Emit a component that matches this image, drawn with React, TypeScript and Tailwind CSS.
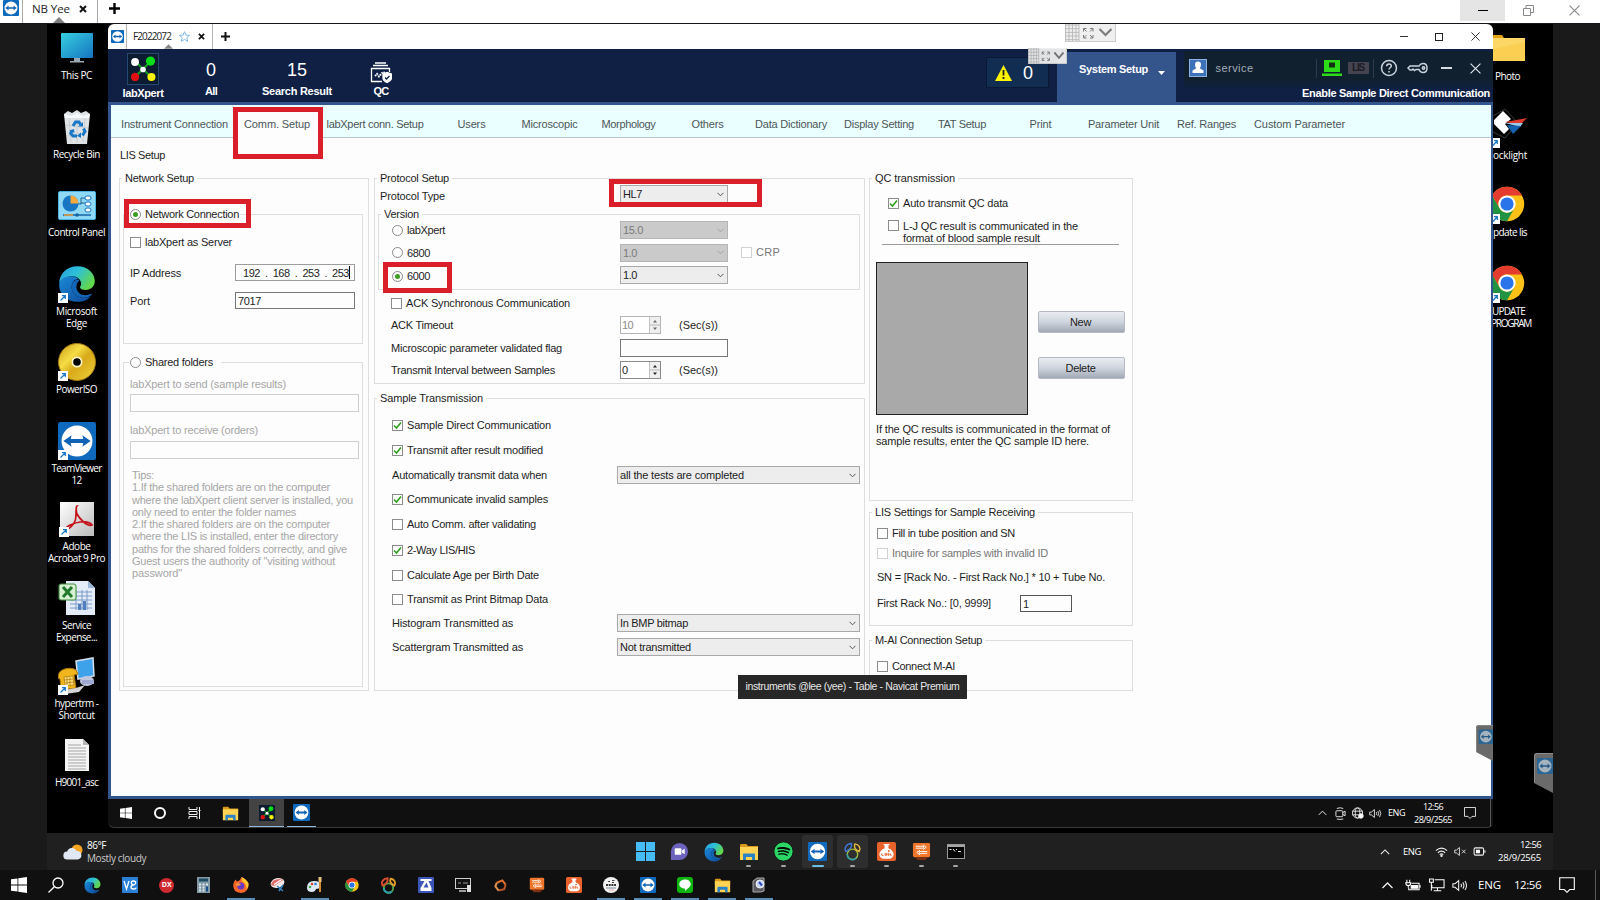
import { useLayoutEffect, useRef, useState, type ReactNode } from "react";
import clsx from "clsx";
import { FaSpotify } from "react-icons/fa6";

/* Single line of text, tracked so that it spans the given width. */
function Fit({ w, children, className }: { w: number; children: string; className?: string }) {
  const ref = useRef<HTMLSpanElement>(null);
  const [tracking, setTracking] = useState(0);
  useLayoutEffect(() => {
    if (ref.current) {
      const natural = ref.current.getBoundingClientRect().width;
      setTracking((w - natural) / children.length);
    }
  }, []);
  return (
    <span ref={ref} className={clsx("inline-block whitespace-pre", className)} style={{ letterSpacing: tracking }}>
      {children}
    </span>
  );
}

/* ---------- icons ---------- */

function TeamViewer({ className }: { className?: string }) {
  return (
    <svg viewBox="0 0 32 32" className={clsx("shrink-0", className)}>
      <rect width="32" height="32" rx="2" fill="#0f69bd" />
      <circle cx="16" cy="16" r="13" fill="#fff" />
      <path d="M4.500 16l7-4.800-.8 3.100h10.600l-.8-3.100 7 4.800-7 4.800.8-3.100H10.700l.8 3.100z" fill="#0f62b4" />
    </svg>
  );
}

function Edge({ className }: { className?: string }) {
  return (
    <svg viewBox="0 0 32 32" className={className}>
      <defs>
        <linearGradient id="edgeTop" x1="0" y1="0" x2="1" y2="0.5">
          <stop offset="0" stopColor="#2a9be0" />
          <stop offset="0.5" stopColor="#2cc0d8" />
          <stop offset="1" stopColor="#62d74e" />
        </linearGradient>
        <linearGradient id="edgeLow" x1="0" y1="0" x2="1" y2="1">
          <stop offset="0" stopColor="#1b8ad8" />
          <stop offset="1" stopColor="#0c4a9a" />
        </linearGradient>
      </defs>
      <path d="M1 16C1 7 7.500 1 16.500 1 25.500 1 31 7.500 31 13.500c0 4.500-3.500 7.500-7.500 7.500-3 0-5-.9-5-2.200 0-.8 1-1.200 1-3C19.500 12.500 16.500 9.500 12 9.500 6 9.500 1.500 13 1 16z" fill="url(#edgeTop)" />
      <path d="M1 16c.5-4 5-6.500 10-6.500 3 0 5 1 6.500 2.500-3.500-.5-6 2.500-6 6.500 0 5.500 5 9 10 9 2.500 0 4.500-.8 6-1.500C25 29.500 21 31 16.500 31 7.500 31 .5 24.500 1 16z" fill="url(#edgeLow)" />
      <path d="M11.500 18.500c0 5.500 5 9 10 9 2.700 0 5-.9 6.700-2.200.5-.5.2-1.100-.5-.8-6.200 2.600-12.200-.5-12.200-6 0-2.500 1.200-4.500 2.800-5.800-3.800-1.200-6.800 1.800-6.800 5.800z" fill="#1266b8" />
    </svg>
  );
}

function Chrome({ className }: { className?: string }) {
  return (
    <svg viewBox="0 0 48 48" className={className}>
      <circle cx="24" cy="24" r="23" fill="#fbc116" />
      <path d="M4.080 12.500A23 23 0 0 1 43.900 12.500H24a11.500 11.500 0 0 0-10 17.200z" fill="#e33b2e" />
      <path d="M4.080 12.500A23 23 0 0 0 24 47l10-17.250A11.500 11.500 0 0 1 14.040 29.750z" fill="#229342" />
      <circle cx="24" cy="24" r="11.500" fill="#fff" />
      <circle cx="24" cy="24" r="8.800" fill="#2a74ea" />
    </svg>
  );
}

function Folder({ className }: { className?: string }) {
  return (
    <svg viewBox="0 0 20 20" className={className}>
      <path d="M1 3.500C1 2.700 1.500 2 2.300 2h5l1.700 2H19v5H1z" fill="#d99a1c" />
      <path d="M1 5h18v12.500a.5.500 0 0 1-.5.500h-17a.5.500 0 0 1-.5-.5z" fill="#ffd353" />
      <path d="M4 18v-5.500c0-.6.500-1 1-1h10c.6 0 1 .5 1 1V18h-3v-3H7v3z" fill="#2b83c6" />
    </svg>
  );
}

function LabX({ className }: { className?: string }) {
  return (
    <svg viewBox="0 0 32 32" className={className}>
      <rect width="32" height="32" fill="#0b1b30" />
      <path d="M8 8L24 24M24 8L8 24" stroke="#159a25" strokeWidth="2.200" />
      <circle cx="7.500" cy="8.500" r="4.200" fill="#fff" />
      <circle cx="24" cy="7.500" r="4.900" fill="#06dd17" />
      <circle cx="7.500" cy="24.500" r="4.400" fill="#e01010" />
      <circle cx="25" cy="24.500" r="4.300" fill="#fdf403" />
      <circle cx="16" cy="16.500" r="3" fill="#fff" />
    </svg>
  );
}

function WinLogo({ className }: { className?: string }) {
  return (
    <svg viewBox="0 0 16 16" className={className} fill="#fff">
      <path d="M0 2.300L6.500 1.400v6.200H0zM7.300 1.300L16 0v7.600H7.300zM0 8.400h6.500v6.200L0 13.700zM7.300 8.400H16V16l-8.700-1.300z" />
    </svg>
  );
}

function Cross({ className }: { className?: string }) {
  return (
    <svg viewBox="0 0 10 10" className={className} stroke="currentColor" fill="none">
      <path d="M.5.500l9 9M9.500.500l-9 9" />
    </svg>
  );
}

function ChevUp({ className }: { className?: string }) {
  return (
    <svg viewBox="0 0 12 7" className={className} stroke="#eee" strokeWidth="1.300" fill="none">
      <path d="M1 6l5-5 5 5" />
    </svg>
  );
}

function Speaker({ className, muted }: { className?: string; muted?: boolean }) {
  return (
    <svg viewBox="0 0 18 14" className={className} stroke="#eee" strokeWidth="1.200" fill="none">
      <path d="M1 5h2.500L7.500 1.500v11L3.500 9H1z" />
      {muted ? <path d="M11 4.500l5 5M16 4.500l-5 5" /> : <path d="M10 5q1.300 2 0 4M12.200 3.500q2.400 3.500 0 7M14.600 2q3.400 5 0 10" />}
    </svg>
  );
}

function Notice({ className }: { className?: string }) {
  return (
    <svg viewBox="0 0 16 16" className={className} stroke="#fff" strokeWidth="1.100" fill="none">
      <path d="M.7.700h14.600v11.800h-4.600L8 15.300l-2.700-2.800H.7z" />
    </svg>
  );
}

function Jar({ className }: { className?: string }) {
  return (
    <svg viewBox="0 0 20 20" className={className}>
      <rect width="20" height="20" rx="2" fill="#e8622c" />
      <path d="M7 2h6v1.500h-1v3c3 1.200 5.500 3.500 5.500 6.500 0 2.500-1.500 4-3.500 4.700H6C4 17 2.500 15.500 2.500 13c0-3 2.500-5.300 5.500-6.500v-3H7z" fill="#fff" />
      <path d="M5 12v2h2M8.500 12h1.500v2H8.500zM11.500 12h1v2h-1zM14 12v2h1.500" stroke="#e8622c" fill="none" />
      <circle cx="12.500" cy="9.500" r="1" fill="#e8622c" />
    </svg>
  );
}

function Board({ className }: { className?: string }) {
  return (
    <svg viewBox="0 0 20 20" className={className}>
      <rect x="1" y="1" width="18" height="15" rx="1.500" fill="#f0762b" />
      <path d="M3 16h14l-3 3H6z" fill="#7d2f12" />
      <path d="M4 4.500h8v2H4M11.500 3l3.500 2.500L11.500 8M16 10H8v2h8M8.500 8.500L5 11l3.500 2.500" stroke="#fff" strokeWidth="1" fill="none" />
    </svg>
  );
}

function Navicat({ className, warm }: { className?: string; warm?: boolean }) {
  return (
    <svg viewBox="0 0 20 20" className={className} fill="none" strokeWidth={warm ? 2.200 : 1.500}>
      <circle cx="10" cy="13" r="5.500" stroke={warm ? "#58a94a" : "#9dbb3e"} />
      <path d="M4.500 13a5.500 5.500 0 0 0 9.500 3.800" stroke="#2c9fb0" />
      <path d="M3 10C.8 6 4 1.500 9 1.500 9.500 5 7.500 8 3 10z" stroke={warm ? "#d94c32" : "#3f77d8"} />
      <path d="M17 10c2.200-4-.5-7.500-4.500-8-1.500 3.500.5 6.500 4.500 8z" stroke={warm ? "#e39b2d" : "#e6bc3a"} />
    </svg>
  );
}

function GripBar({ large }: { large?: boolean }) {
  return (
    <svg viewBox="0 0 51 18" preserveAspectRatio="none" className={large ? "h-[18px] w-[51px]" : "h-4 w-[39px]"}>
      <rect width="51" height="18" fill="#efefef" />
      <path d="M.5 0v18M4 0v18M7.500 0v18M11 0v18M14 0v18M0 1h14M0 4.700h14M0 8.400h14M0 12h14M0 15.700h14" stroke="#b9b9b9" strokeWidth="1" />
      <path d="M18.500 7.500v-3h3M25 4.500h3v3M28 11v3h-3M21.500 14h-3v-3M18.500 4.500l3 3M28 4.500l-3 3M28 14l-3-3M18.500 14l3-3" stroke="#777" fill="none" />
      <path d="M34.500 5l6 6 6-6" stroke="#777" strokeWidth="2.200" fill="none" />
      <path d="M0 17.500h51M50.500 0v18" stroke="#c9c9c9" />
    </svg>
  );
}

/* ---------- form parts ---------- */

function Check({ on, dim }: { on?: boolean; dim?: boolean }) {
  return (
    <span className={clsx("flex size-[11px] shrink-0 items-center justify-center border bg-white", dim ? "border-[#d2d2d2]" : "border-[#8c8c8c]")}>
      {on && (
        <svg viewBox="0 0 9 9" className="size-[9px]" fill="none" stroke="#2f9e1c" strokeWidth="1.600">
          <path d="M1 4.500L3.500 7 8 1.500" />
        </svg>
      )}
    </span>
  );
}

function Radio({ on }: { on?: boolean }) {
  return (
    <span className="flex size-[11px] shrink-0 items-center justify-center rounded-full border border-[#8a8a8a] bg-white">
      {on && <span className="size-[5px] rounded-full bg-[#3c9f22]" />}
    </span>
  );
}

function Select({ text, w, dim, className }: { text: string; w: number; dim?: boolean; className?: string }) {
  return (
    <div className={clsx("flex h-[18px] items-center justify-between border pl-[2px] pr-[3px]", dim ? "border-[#b5b5b5] bg-[#cacaca] text-[#7a7a7a]" : "border-[#a9a9a9] bg-[#ededed]", className)}>
      <Fit w={w}>{text}</Fit>
      <svg viewBox="0 0 7 5" className="h-[5px] w-[7px]" fill="none" stroke={dim ? "#a2a2a2" : "#555"}>
        <path d="M.5.800l3 3 3-3" />
      </svg>
    </div>
  );
}

function Spinner({ text, w, dim }: { text: string; w: number; dim?: boolean }) {
  return (
    <div className={clsx("flex h-[18px] w-[41px] items-stretch border bg-white", dim ? "border-[#b5b5b5] text-[#8a8a8a]" : "border-[#8a8a8a]")}>
      <span className="flex flex-1 items-center pl-px">
        <Fit w={w}>{text}</Fit>
      </span>
      <span className="flex w-[11px] flex-col border-l border-[#c4c4c4] bg-[#efefef]">
        <svg viewBox="0 0 10 16" className="h-4 w-[10px]">
          <path d="M3 5.500L5 3l2 2.500zM3 10.500L5 13l2-2.500z" fill={dim ? "#666" : "#222"} />
          <path d="M0 8h10" stroke="#b5b5b5" />
        </svg>
      </span>
    </div>
  );
}

function Group({ title, w, className, children }: { title: string; w: number; className: string; children: ReactNode }) {
  return (
    <fieldset className={clsx("border border-[#dedede]", className)}>
      <legend className="ml-[2px] h-[14px] px-[3px] leading-[14px]">
        <Fit w={w}>{title}</Fit>
      </legend>
      {children}
    </fieldset>
  );
}

function Marker({ className }: { className: string }) {
  return <div className={clsx("pointer-events-none absolute border-[5px] border-[#da1f2b]", className)} />;
}

function CheckRow({ text, w, on, dim, className }: { text: string; w: number; on?: boolean; dim?: boolean; className: string }) {
  return (
    <label className={clsx("flex items-center gap-[4px]", dim && "text-[#777]", className)}>
      <Check on={on} dim={dim} />
      <Fit w={w} className="pb-px">{text}</Fit>
    </label>
  );
}

/* ---------- desktop icons ---------- */

function Shortcut() {
  return (
    <svg viewBox="0 0 10 10" className="absolute bottom-0 left-0 size-[10px]">
      <rect width="10" height="10" fill="#fff" />
      <path d="M2.500 7.500L7 3M4 2.700h3.300V6" stroke="#1977c9" strokeWidth="1.200" fill="none" />
    </svg>
  );
}

const art: Record<string, ReactNode> = {
  pc: (
    <svg viewBox="0 0 34 32" className="h-8 w-[34px]">
      <defs>
        <linearGradient id="screen" x1="0" y1="0" x2="1" y2="1">
          <stop offset="0" stopColor="#36d0de" />
          <stop offset="1" stopColor="#1673c2" />
        </linearGradient>
      </defs>
      <rect x="1" y="1" width="32" height="25" rx="1" fill="url(#screen)" />
      <path d="M14 26h6v3h-6zM10 29h14v1.500H10z" fill="#9aa7b0" />
    </svg>
  ),
  bin: (
    <svg viewBox="0 0 28 34" className="h-[34px] w-7">
      <path d="M1 4l4-3 4 2 5-3 4 3 5-2 4 3-3 30H4z" fill="#dfe3e6" />
      <path d="M1 4l7 2 6-3 6 3 7-2-1 4H2z" fill="#f7f8f9" />
      <path d="M6 8l2 24M14 9v24M22 8l-2 24M3 15l22 3M4 26l20-4" stroke="#c2c8cd" strokeWidth=".8" />
      <path d="M10 16l2.500-4h3.500l1.500 2.500M20.500 18.500l1.500 3-2.500 4M14 26h-4l-2.300-2.700 1.300-2.500" stroke="#1878c8" strokeWidth="3" fill="none" />
      <path d="M15 16.500h5V12zM18 22.500V28l-4-2.200zM6 20.500l5-1.500.5 4z" fill="#1878c8" />
    </svg>
  ),
  panel: (
    <svg viewBox="0 0 38 29" className="h-[29px] w-[38px]">
      <rect x=".5" y=".5" width="37" height="28" rx="1.500" fill="#8fd8f6" stroke="#4ab3e0" />
      <circle cx="12.500" cy="12.500" r="8" fill="#1976c5" />
      <path d="M12.500 12.500V4.500a8 8 0 0 1 8 8z" fill="#f5a83c" />
      <path d="M20 13h3V7h4M23 13v-1h4" stroke="#23638f" fill="none" />
      <rect x="27" y="5" width="6" height="4" rx="2" fill="#fff" stroke="#1976c5" />
      <rect x="27" y="11" width="6" height="4" rx="2" fill="#fff" stroke="#1976c5" />
      <rect x="27" y="17" width="6" height="4" rx="2" fill="#fff" stroke="#1976c5" />
      <path d="M5 24h28" stroke="#1464a5" strokeWidth="1.500" />
      <path d="M6 24h9" stroke="#f0a13a" strokeWidth="1.500" />
      <circle cx="19" cy="24" r="1.800" fill="#1464a5" />
    </svg>
  ),
  edge: <Edge className="size-[38px]" />,
  iso: (
    <svg viewBox="0 0 38 38" className="size-[38px]">
      <defs>
        <linearGradient id="disc" x1="0" y1="0" x2="1" y2="1">
          <stop offset="0" stopColor="#c99b14" />
          <stop offset=".35" stopColor="#f6dd46" />
          <stop offset=".55" stopColor="#d8a91a" />
          <stop offset="1" stopColor="#efd23c" />
        </linearGradient>
      </defs>
      <circle cx="19" cy="19" r="18.500" fill="url(#disc)" stroke="#a37a15" />
      <circle cx="19" cy="19" r="5.500" fill="#fff6c8" />
      <circle cx="19" cy="19" r="3.800" fill="#000" />
    </svg>
  ),
  tv: <TeamViewer className="size-[38px]" />,
  pdf: (
    <svg viewBox="0 0 36 36" className="size-9">
      <defs>
        <linearGradient id="sheet" x1="0" y1="0" x2="1" y2="1">
          <stop offset="0" stopColor="#fff" />
          <stop offset="1" stopColor="#bcbcbc" />
        </linearGradient>
      </defs>
      <rect x="1" y="1" width="34" height="34" fill="url(#sheet)" />
      <path d="M18 5c-2 2 0 10-2 15S9 29 6 29c1-4 9-7 15-8s11 1 12 3c-5 2-13-7-15-11-1-3-1-8 0-8z" stroke="#c4151c" strokeWidth="1.700" fill="none" />
    </svg>
  ),
  xls: (
    <svg viewBox="0 0 38 36" className="h-9 w-[38px]">
      <path d="M8 1h22l7 7v27H8z" fill="#e3ecf7" />
      <path d="M30 1v7h7z" fill="#9db7d8" />
      <path d="M12 12h22M12 16h22M12 20h22M12 24h22M12 28h22M18 10v20M24 10v20M29 10v20" stroke="#7c9cc9" />
      <path d="M20 30v-6h3v6M25 30v-9h3v9" fill="#4f7fbf" />
      <rect x="1" y="4" width="17" height="16" rx="2" fill="#d7efd2" stroke="#3f8f3d" />
      <path d="M5 7l9 10M14 7L5 17" stroke="#217a2b" strokeWidth="3" />
    </svg>
  ),
  hyper: (
    <svg viewBox="0 0 38 38" className="size-[38px]">
      <path d="M18 4l17-3 1 18-16 3z" fill="#3da2ea" stroke="#d8dfe8" strokeWidth="1.500" />
      <ellipse cx="29" cy="24" rx="7" ry="5" fill="#bfc6e0" />
      <path d="M24 27h12v-4H24z" fill="#9fa9cf" />
      <path d="M1 16c3-5 13-6 17-3l2 4-4 1 2 13-15 2-1-11-2-1z" fill="#f0b51c" stroke="#a8740c" />
      <path d="M6 20l9-1 1 9-9 1z" fill="#ffe07a" stroke="#a8740c" strokeWidth=".7" />
      <path d="M9 20v8M12 20v8M6 23l9-1M7 26l9-1" stroke="#a8740c" strokeWidth=".7" />
      <path d="M6 33l12-2 9-3-6 7-14 2z" fill="#d5d5d8" />
    </svg>
  ),
  txt: (
    <svg viewBox="0 0 26 34" className="h-[34px] w-[26px]">
      <path d="M1 1h18l6 6v26H1z" fill="#f4f4f4" />
      <path d="M19 1v6h6z" fill="#b7b7b7" />
      <path d="M4 7h13M4 10h18M4 13h18M4 16h18M4 19h18M4 22h18M4 25h18M4 28h18M4 31h18" stroke="#a5a5a5" />
    </svg>
  ),
};

const leftIcons: { art: string; link?: boolean; lines: [string, number][] }[] = [
  { art: "pc", lines: [["This PC", 31]] },
  { art: "bin", lines: [["Recycle Bin", 47]] },
  { art: "panel", lines: [["Control Panel", 57]] },
  { art: "edge", link: true, lines: [["Microsoft", 41], ["Edge", 21]] },
  { art: "iso", link: true, lines: [["PowerISO", 41]] },
  { art: "tv", link: true, lines: [["TeamViewer", 50], ["12", 10]] },
  { art: "pdf", link: true, lines: [["Adobe", 28], ["Acrobat 9 Pro", 57]] },
  { art: "xls", lines: [["Service", 29], ["Expense...", 41]] },
  { art: "hyper", link: true, lines: [["hypertrm -", 44], ["Shortcut", 36]] },
  { art: "txt", lines: [["H9001_asc", 43]] },
];

function DesktopLeft() {
  return (
    <div className="flex w-[61px] shrink-0 flex-col pr-[2px] pt-[3px] font-['Open_Sans',sans-serif] text-[10px] text-white">
      {leftIcons.map((i) => (
        <div key={i.lines[0][0]} className="flex h-[78.500px] flex-col items-center">
          <div className="flex h-[42px] items-center">
            <div className="relative">
              {art[i.art]}
              {i.link && <Shortcut />}
            </div>
          </div>
          {i.lines.map(([t, w]) => (
            <Fit key={t} w={w} className="h-[12px] leading-[12px]">
              {t}
            </Fit>
          ))}
        </div>
      ))}
    </div>
  );
}

function DesktopRight() {
  const link = (
    <svg viewBox="0 0 7 10" className="absolute bottom-0 left-0 h-[10px] w-[7px]">
      <rect width="7" height="10" fill="#fff" />
      <path d="M0 7.500L4 3M1 2.700h3.300V6" stroke="#1977c9" strokeWidth="1.200" fill="none" />
    </svg>
  );
  return (
    <div className="flex w-[60px] shrink-0 flex-col overflow-hidden pt-[3px] font-['Open_Sans',sans-serif] text-[10px] text-white">
      <div className="h-[78.500px]">
        <div className="flex h-[42px] items-center">
          <svg viewBox="0 0 32 28" className="h-7 w-8">
            <path d="M0 1h9l2 3H0z" fill="#e0a312" />
            <path d="M0 4h32v23H0z" fill="#fcd766" />
            <path d="M0 15L32 8v19H0z" fill="#fbcf52" />
          </svg>
        </div>
        <Fit w={25} className="ml-[2px] leading-[12px]">Photo</Fit>
      </div>
      <div className="h-[78.500px]">
        <div className="relative h-[42px]">
          <svg viewBox="0 0 34 40" className="h-10 w-[34px]">
            <path d="M0 10l12-7 13 14-13 15L0 26" fill="#000" stroke="#3a3a3a" />
            <path d="M1 14L10 5l8 8-6 5 4 5-5 5L1 18z" fill="#fff" />
            <path d="M12 16l22-4-7 7z" fill="#e03a2c" />
            <path d="M12 17l18 0-3 4z" fill="#9cc7e8" />
            <path d="M14 19l14 1-8 8z" fill="#1463b0" />
          </svg>
          {link}
        </div>
        <Fit w={34} className="leading-[12px]">ocklight</Fit>
      </div>
      <div className="h-[78.500px]">
        <div className="relative h-[40px] pt-[2px]">
          <Chrome className="-ml-1 size-9" />
          {link}
        </div>
        <Fit w={34} className="mt-[2px] leading-[12px]">pdate lis</Fit>
      </div>
      <div className="h-[78.500px]">
        <div className="relative h-[40px] pt-[2px]">
          <Chrome className="-ml-1 size-9" />
          {link}
        </div>
        <div className="-ml-px mt-[2px] flex flex-col items-start">
          <Fit w={33} className="h-[12px] leading-[12px]">UPDATE</Fit>
          <Fit w={40} className="-ml-px h-[12px] leading-[12px]">PROGRAM</Fit>
        </div>
      </div>
    </div>
  );
}

/* ---------- labXpert window ---------- */

const tabs: [string, number, string][] = [
  ["Instrument Connection", 107, "ml-[10px]"],
  ["Comm. Setup", 66, "ml-[16px]"],
  ["labXpert conn. Setup", 97, "ml-[16.500px]"],
  ["Users", 28, "ml-[34px]"],
  ["Microscopic", 56, "ml-[36px]"],
  ["Morphology", 54, "ml-[24px]"],
  ["Others", 32, "ml-[36px]"],
  ["Data Dictionary", 72, "ml-[31.500px]"],
  ["Display Setting", 70, "ml-[17px]"],
  ["TAT Setup", 48, "ml-[24px]"],
  ["Print", 22, "ml-[43.500px]"],
  ["Parameter Unit", 71, "ml-[36.500px]"],
  ["Ref. Ranges", 59, "ml-[18px]"],
  ["Custom Parameter", 91, "ml-[18px]"],
];

function WindowTitle() {
  return (
    <div className="flex h-[25px] items-center rounded-t-[6px] bg-white">
      <TeamViewer className="ml-[3px] size-[13px]" />
      <div className="relative ml-[2px] flex h-full w-[87px] items-center border-x border-[#b5b5b5] pl-[6px] font-['Open_Sans',sans-serif] text-[10px] text-[#222]">
        <Fit w={38} className="pb-px">F2022072</Fit>
        <svg viewBox="0 0 12 12" className="ml-2 size-[11px]" fill="none" stroke="#79b5e6">
          <path d="M6 .8l1.500 3.700 4 .3-3 2.600 1 3.900L6 9.200l-3.500 2.100 1-3.900-3-2.600 4-.3z" />
        </svg>
        <svg viewBox="0 0 8 8" className="ml-2 size-[7px]" stroke="#111" strokeWidth="2">
          <path d="M1 1l6 6M7 1L1 7" />
        </svg>
        <svg viewBox="0 0 10 5" className="absolute bottom-0 left-[37px] h-[5px] w-[9px]">
          <path d="M0 5l5-5 5 5z" fill="#888" />
        </svg>
      </div>
      <svg viewBox="0 0 9 9" className="ml-[8px] size-[9px]" stroke="#111" strokeWidth="2">
        <path d="M4.500 0v9M0 4.500h9" />
      </svg>
      <div className="ml-auto flex items-center pr-[13px] text-[#222]">
        <span className="h-px w-[8px] bg-[#333]" />
        <span className="ml-[27px] size-[8px] border border-[#222]" />
        <Cross className="ml-[28px] size-[9px]" />
      </div>
    </div>
  );
}

function Header() {
  return (
    <header className="flex h-[56px] border-b-[3px] border-[#34548c] bg-[#0f2044] text-[11px] font-bold text-white">
      <div className="ml-[14px] flex w-[42px] flex-col items-center pt-[4px]">
        <LabX className="size-8 border border-[#27496f]" />
        <Fit w={41} className="mt-px leading-[14px]">labXpert</Fit>
      </div>
      <div className="ml-[25px] flex w-[44px] flex-col items-center pt-[9px]">
        <span className="text-[18px] font-normal leading-[24px]">0</span>
        <Fit w={12} className="mt-[2px] leading-[14px]">All</Fit>
      </div>
      <div className="ml-[29px] flex w-[70px] flex-col items-center pt-[9px]">
        <Fit w={20} className="text-[18px] font-normal leading-[24px]">15</Fit>
        <Fit w={70} className="mt-[2px] leading-[14px]">Search Result</Fit>
      </div>
      <div className="ml-[34px] flex w-[30px] flex-col items-center pt-[13px]">
        <svg viewBox="0 0 22 21" className="h-[21px] w-[22px]" fill="none" stroke="#fff" strokeWidth="1.300">
          <path d="M5 1h11M3 3.500h15M12 19.500H1.500v-13h18V10" />
          <path d="M5 14l2-2 2 2.500L13 10l2 1" strokeDasharray="1.500 1" strokeWidth="2" />
          <path d="M13 12l4-1.500L21.500 12v4c0 2-2 3.500-4.500 4.500-2.500-1-4-2.500-4-4.500z" fill="#fff" />
          <path d="M15 15.500l1.500 1.500 3-3" stroke="#0f2044" />
        </svg>
        <Fit w={15} className="mt-[1px] leading-[14px]">QC</Fit>
      </div>
      <div className="ml-auto mt-[8px] flex h-[31px] w-[63px] items-center border border-[#0a1835] bg-[#122d52] pl-[8px]">
        <svg viewBox="0 0 17 16" className="h-4 w-[17px]">
          <path d="M8.500 0L17 16H0z" fill="#fbf400" />
          <path d="M8.500 5v5.500M8.500 12v2" stroke="#222" strokeWidth="1.800" />
        </svg>
        <span className="ml-[11px] text-[18px] font-normal">0</span>
      </div>
      <div className="ml-[8px] mt-[3px] flex w-[119px] items-start bg-[#34548c] pl-[22px] pt-[10px]">
        <Fit w={69} className="leading-[14px]">System Setup</Fit>
        <svg viewBox="0 0 7 4" className="ml-[10px] mt-[9px] h-[4px] w-[7px]">
          <path d="M0 0h7L3.500 4z" fill="#fff" />
        </svg>
      </div>
      <div className="flex w-[317px] flex-col">
        <div className="ml-[8px] mt-[2px] flex h-[37px] items-center bg-linear-to-b from-[#11202e] from-75% to-[#0f2040] pb-[3px]">
          <svg viewBox="0 0 18 18" className="ml-[5px] size-[18px]">
            <rect x=".5" y=".5" width="17" height="17" fill="#3d72ba" stroke="#8fb3e0" />
            <path d="M6 5.500a3 3 0 0 1 6 0c0 2-.8 2.700-1 4l3.500 2V14h-11v-2.500l3.500-2c-.2-1.300-1-2-1-4z" fill="#fff" />
          </svg>
          <Fit w={38} className="ml-[8.500px] font-normal text-[#a3adba]">service</Fit>
          <span className="ml-[62px] h-[19px] w-px bg-[#2c3c4c]" />
          <svg viewBox="0 0 20 16" className="ml-[5px] h-4 w-5">
            <path d="M2 0h16v12H2zM0 13.500h20V16H0z" fill="#2ddc19" />
            <rect x="7" y="2.500" width="6" height="5" fill="#143014" />
          </svg>
          <span className="ml-[6px] flex h-[12px] w-[21px] items-center justify-center bg-[#45434f]">
            <Fit w={12} className="text-[10px] font-bold leading-none text-[#1b1c26]">LIS</Fit>
          </span>
          <span className="ml-[4px] h-[19px] w-px bg-[#2c3c4c]" />
          <svg viewBox="0 0 18 18" className="ml-[6px] size-[18px]" fill="none" stroke="#c9d3dd" strokeWidth="1.500">
            <circle cx="9" cy="9" r="7.500" />
            <path d="M6.700 7.200c0-3 4.600-3 4.600-.2 0 1.800-2.300 1.700-2.300 3.500M9 12v1.500" />
          </svg>
          <svg viewBox="0 0 21 12" className="ml-[9px] h-3 w-[21px]" fill="none" stroke="#c9d3dd" strokeWidth="1.500">
            <path d="M12 4H3L1 6l2 2h2l1-1 1.500 1.500L9 7.500h3c.8 2 2 3 4 3 2.500 0 4-1.800 4-4.500S18.500 1.500 16 1.500c-2 0-3.200 1-4 2.500z" />
            <circle cx="16.500" cy="6" r="1.200" />
          </svg>
          <span className="ml-[13px] h-[1.500px] w-[11px] bg-[#d5dbe2]" />
          <Cross className="ml-[18px] size-[11px] text-[#e5e9ee]" />
        </div>
        <div className="flex justify-end pr-[3px] text-[11px]">
          <Fit w={188} className="-mt-[2px] leading-[14px]">Enable Sample Direct Communication</Fit>
        </div>
      </div>
    </header>
  );
}

function NetworkSetup() {
  const tips: [string, number][] = [
    ["Tips:", 22],
    ["1.If the shared folders are on the computer", 198],
    ["where the labXpert client server is installed, you", 221],
    ["only need to enter the folder names", 164],
    ["2.If the shared folders are on the computer", 198],
    ["where the LIS is installed, enter the directory", 206],
    ["paths for the shared folders correctly, and give", 215],
    ["Guest users the authority of \"visiting without", 203],
    ["password\"", 50],
  ];
  return (
    <Group title="Network Setup" w={69} className="h-[520px] w-[250px]">
      <fieldset className="relative ml-[3px] mt-[22px] h-[137px] w-[240px] border border-[#dedede]">
        <legend className="ml-[5px] flex h-[14px] items-center gap-[4px] px-px leading-[14px]">
          <Radio on />
          <Fit w={94}>Network Connection</Fit>
        </legend>
        <CheckRow text="labXpert as Server" w={87} className="ml-[6px] h-[43px]" />
        <div className="ml-[6px] flex h-[17px] items-center">
          <span className="w-[105px]"><Fit w={51}>IP Address</Fit></span>
          <div className="flex h-[17px] w-[120px] items-center border border-[#9d9d9d] pl-[7px]">
            <Fit w={106}>192  .  168  .  253  .  253</Fit>
            <span className="h-[13px] w-px bg-black" />
          </div>
        </div>
        <div className="ml-[6px] mt-[11px] flex h-[17px] items-center">
          <span className="w-[105px]"><Fit w={20}>Port</Fit></span>
          <div className="flex h-[17px] w-[120px] items-center border border-[#777] pl-[2px]">
            <Fit w={23}>7017</Fit>
          </div>
        </div>
        <Marker className="left-0 top-[-22px] h-[29px] w-[127px]" />
      </fieldset>
      <fieldset className="ml-[3px] mt-[11px] h-[332px] w-[240px] border border-[#dedede]">
        <legend className="ml-[5px] flex h-[14px] items-center gap-[4px] pl-px pr-[8px] leading-[14px]">
          <Radio />
          <Fit w={68}>Shared folders</Fit>
        </legend>
        <div className="pl-[6px] text-[#a6a6a6]">
          <div className="flex h-[25px] items-center pt-[4px]"><Fit w={156}>labXpert to send (sample results)</Fit></div>
          <div className="h-[18px] w-[229px] border border-[#cfcfcf]" />
          <div className="flex h-[29px] items-center pt-[6px]"><Fit w={128}>labXpert to receive (orders)</Fit></div>
          <div className="h-[18px] w-[229px] border border-[#cfcfcf]" />
          <div className="ml-[2px] mt-[10px] flex flex-col items-start">
            {tips.map(([t, w], i) => (
              <Fit key={i} w={w} className="h-[12.300px] leading-[12.300px]">{t}</Fit>
            ))}
          </div>
        </div>
      </fieldset>
    </Group>
  );
}

function ProtocolSetup() {
  return (
    <Group title="Protocol Setup" w={69} className="relative h-[213px] w-[491px]">
      <div className="flex h-[22px] items-start">
        <span className="w-[245px] pl-[5px] leading-[22px]"><Fit w={65}>Protocol Type</Fit></span>
        <Select text="HL7" w={19} className="w-[108px]" />
      </div>
      <Group title="Version" w={35} className="ml-[3px] h-[83px] w-[482px]">
        <div className="flex h-[18px] items-center">
          <span className="flex w-[241px] items-center gap-[4px] pl-[13px]"><Radio /><Fit w={38}>labXpert</Fit></span>
          <Select text="15.0" w={20} dim className="w-[108px]" />
        </div>
        <div className="mt-[4px] flex h-[19px] items-center">
          <span className="flex w-[241px] items-center gap-[4px] pl-[13px]"><Radio /><Fit w={23}>6800</Fit></span>
          <Select text="1.0" w={14} dim className="w-[108px]" />
          <CheckRow text="CRP" w={24} dim className="ml-[13px]" />
        </div>
        <div className="mt-[4px] flex h-[20px] items-start">
          <span className="flex h-[20px] w-[241px] items-center gap-[4px] pl-[13px]"><Radio on /><Fit w={23}>6000</Fit></span>
          <Select text="1.0" w={14} className="w-[108px]" />
        </div>
      </Group>
      <CheckRow text="ACK Synchronous Communication" w={164} className="ml-[16px] mt-[4px] h-[19px]" />
      <div className="mt-[3px] flex h-[18px] items-center">
        <span className="w-[245px] pl-[16px]"><Fit w={62}>ACK Timeout</Fit></span>
        <Spinner text="10" w={11} dim />
        <Fit w={39} className="ml-[18px]">(Sec(s))</Fit>
      </div>
      <div className="mt-[5px] flex h-[18px] items-center">
        <span className="w-[245px] pl-[16px]"><Fit w={171}>Microscopic parameter validated flag</Fit></span>
        <div className="h-[18px] w-[108px] border border-[#777]" />
      </div>
      <div className="mt-[4px] flex h-[18px] items-center">
        <span className="w-[245px] pl-[16px]"><Fit w={164}>Transmit Interval between Samples</Fit></span>
        <Spinner text="0" w={6} />
        <Fit w={39} className="ml-[18px]">(Sec(s))</Fit>
      </div>
      <Marker className="left-[234px] top-[-6px] h-[28px] w-[153px]" />
      <Marker className="left-[8px] top-[77px] h-[31px] w-[69px]" />
    </Group>
  );
}

function SampleTransmission() {
  return (
    <Group title="Sample Transmission" w={103} className="mt-[7px] h-[300px] w-[491px]">
      <div className="ml-[17px] mt-[8px]">
        <CheckRow text="Sample Direct Communication" w={144} on className="h-[25px]" />
        <CheckRow text="Transmit after result modified" w={136} on className="h-[24px]" />
        <div className="flex h-[26px] items-center">
          <span className="w-[225px]"><Fit w={155}>Automatically transmit data when</Fit></span>
          <Select text="all the tests are completed" w={124} className="w-[243px]" />
        </div>
        <CheckRow text="Communicate invalid samples" w={141} on className="h-[23px]" />
        <CheckRow text="Auto Comm. after validating" w={129} className="h-[26px]" />
        <CheckRow text="2-Way LIS/HIS" w={68} on className="h-[26px]" />
        <CheckRow text="Calculate Age per Birth Date" w={132} className="h-[24px]" />
        <CheckRow text="Transmit as Print Bitmap Data" w={141} className="h-[24px]" />
        <div className="flex h-[24px] items-center">
          <span className="w-[225px]"><Fit w={121}>Histogram Transmitted as</Fit></span>
          <Select text="In BMP bitmap" w={68} className="w-[243px]" />
        </div>
        <div className="flex h-[24px] items-center">
          <span className="w-[225px]"><Fit w={131}>Scattergram Transmitted as</Fit></span>
          <Select text="Not transmitted" w={71} className="w-[243px]" />
        </div>
      </div>
    </Group>
  );
}

function GlossButton({ text, w }: { text: string; w: number }) {
  return (
    <button className="flex h-[22px] w-[87px] items-center justify-center rounded-[2px] border border-[#b4b9c2] bg-linear-to-b from-[#e9edf2] via-[#cfd5de] via-50% to-[#a2a9b5] pr-[2px]">
      <Fit w={w}>{text}</Fit>
    </button>
  );
}

function QcColumn() {
  return (
    <div>
      <Group title="QC transmission" w={80} className="h-[330px] w-[264px]">
        <CheckRow text="Auto transmit QC data" w={105} on className="ml-[18px] mt-[9px] h-[18px]" />
        <div className="ml-[12px] mt-[8px] flex h-[25px] w-[237px] gap-[4px] border-b border-[#9c9c9c] pl-[6px] leading-[12.300px]">
          <Check />
          <div className="flex flex-col items-start">
            <Fit w={175}>L-J QC result is communicated in the</Fit>
            <Fit w={137}>format of blood sample result</Fit>
          </div>
        </div>
        <div className="ml-[6px] mt-[17px] flex">
          <div className="h-[153px] w-[152px] border border-[#222] bg-[#a9a9a9]" />
          <div className="ml-[10px] mt-[49px] flex flex-col gap-[24px]">
            <GlossButton text="New" w={21} />
            <GlossButton text="Delete" w={30} />
          </div>
        </div>
        <div className="ml-[6px] mt-[8px] flex flex-col items-start leading-[12.300px]">
          <Fit w={234}>If the QC results is communicated in the format of</Fit>
          <Fit w={213}>sample results, enter the QC sample ID here.</Fit>
        </div>
      </Group>
      <Group title="LIS Settings for Sample Receiving" w={160} className="mt-[4px] h-[121px] w-[264px]">
        <div className="ml-[7px] mt-[5px]">
          <CheckRow text="Fill in tube position and SN" w={123} className="h-[19px]" />
          <CheckRow text="Inquire for samples with invalid ID" w={156} dim className="h-[21px]" />
          <div className="flex h-[27px] items-center pb-[2px]"><Fit w={228}>SN = [Rack No. - First Rack No.] * 10 + Tube No.</Fit></div>
          <div className="flex h-[25px] items-center">
            <span className="w-[143px] pb-px"><Fit w={114}>First Rack No.: [0, 9999]</Fit></span>
            <div className="flex h-[17px] w-[52px] items-center border border-[#555] pl-[2px]"><Fit w={6}>1</Fit></div>
          </div>
        </div>
      </Group>
      <Group title="M-AI Connection Setup" w={107} className="mt-[7px] h-[58px] w-[264px]">
        <CheckRow text="Connect M-AI" w={63} className="ml-[7px] h-[39px]" />
      </Group>
    </div>
  );
}

function InnerTaskbar() {
  return (
    <div className="flex h-[29px] items-center rounded-b-[6px] border-b border-[#3a3a3a] bg-[#101010] font-['Open_Sans',sans-serif] text-[9px] text-white">
      <WinLogo className="ml-[12px] size-[12px]" />
      <span className="ml-[22px] size-[12px] rounded-full border-2 border-white" />
      <svg viewBox="0 0 13 12" className="ml-[22px] h-3 w-[13px]" fill="none" stroke="#eee">
        <path d="M1 0v2.500h8V0M1 12V9.500h8V12M1 4.500h8v3H1zM11.500 0v12M10.500 3.500h2" />
      </svg>
      <Folder className="ml-[21px] size-[17px]" />
      <div className="ml-[10px] flex h-full w-[35px] items-center justify-center border-b border-[#8fb8dc] bg-[#434343]">
        <LabX className="size-4" />
      </div>
      <div className="ml-[3px] flex h-full w-[29px] items-center justify-center border-b border-[#8fb8dc]">
        <TeamViewer className="size-[17px]" />
      </div>
      <ChevUp className="ml-auto h-[6px] w-[9px]" />
      <svg viewBox="0 0 12 14" className="ml-[8px] h-[13px] w-[11px]" fill="none" stroke="#eee">
        <rect x="1" y="4" width="7.500" height="6.500" rx="1" />
        <path d="M8.500 6l2.500-1.500v5L8.500 8M2 1.500q3.500-1.500 7 0M2 13q3.500 1 7 0" />
      </svg>
      <svg viewBox="0 0 13 13" className="ml-[6px] size-[12px]" fill="none" stroke="#eee">
        <circle cx="6" cy="6.500" r="5.500" />
        <ellipse cx="6" cy="6.500" rx="2.500" ry="5.500" />
        <path d="M.5 4.500h11M.5 8.500h7" />
        <circle cx="9.700" cy="9.700" r="2.500" fill="#fff" />
      </svg>
      <Speaker className="ml-[5px] h-[11px] w-[13px]" />
      <Fit w={17} className="ml-[6px]">ENG</Fit>
      <div className="ml-[9px] flex w-[38px] flex-col items-center leading-[13px]">
        <Fit w={20}>12:56</Fit>
        <Fit w={38}>28/9/2565</Fit>
      </div>
      <Notice className="ml-[12px] size-[12px]" />
      <span className="ml-[14px] mr-[2px] h-full w-px bg-[#555]" />
    </div>
  );
}

function SideTab({ className }: { className: string }) {
  return (
    <div className={clsx("absolute overflow-hidden", className)}>
      <svg viewBox="0 0 19 40" preserveAspectRatio="none" className="h-full w-full">
        <path d="M3 0h16v40L0 30V3q0-3 3-3z" fill="#6a6a6a" />
        <path d="M.5 30V3Q.5.500 3 .5h16" fill="none" stroke="#8b8b8b" />
        <rect x="3" y="5" width="16" height="16" fill="#2b6593" />
        <circle cx="11" cy="13" r="6.500" fill="#a5b3be" />
        <path d="M5.500 13l3-2.500v1.800h5v-1.800l3 2.500-3 2.500v-1.800h-5v1.800z" fill="#245a86" />
      </svg>
    </div>
  );
}

function LabWindow() {
  return (
    <div className="relative flex h-[804px] w-[1385px] shrink-0 flex-col">
      <WindowTitle />
      <Header />
      <div className="flex h-[694px] flex-col border-x-[3px] border-b-[3px] border-r-2 border-[#34548c] bg-[#fdfdfd] text-[11px] text-[#1d1d1d]">
        <nav className="relative flex h-[33px] shrink-0 items-center border-b border-[#bcc6c6] bg-[#eaffff] pt-[5px] text-[#4b5658]">
          <div className="absolute left-[122px] top-[2px] h-[52px] w-[90px] border-[5px] border-[#da1f2b] bg-[#fdfdfd]" />
          {tabs.map(([t, w, gap]) => (
            <span key={t} className={clsx("relative shrink-0", gap)}>
              <Fit w={w}>{t}</Fit>
            </span>
          ))}
        </nav>
        <div className="flex h-[33px] items-center pl-[9px] pt-[1px]"><Fit w={45}>LIS Setup</Fit></div>
        <div className="flex pl-[8px]">
          <NetworkSetup />
          <div className="ml-[5px]">
            <ProtocolSetup />
            <SampleTransmission />
          </div>
          <div className="ml-[4px]">
            <QcColumn />
          </div>
        </div>
      </div>
      <InnerTaskbar />
      <div className="absolute left-[920px] top-[24px] opacity-95"><GripBar /></div>
      <div className="absolute left-[957px] top-0 opacity-95"><GripBar large /></div>
      <div className="absolute left-[630px] top-[651px] flex h-[24px] w-[229px] items-center justify-center bg-[#272727] pb-[2px] text-[10.500px] text-[#e6e6e6]">
        <Fit w={214}>instruments @lee (yee) - Table - Navicat Premium</Fit>
      </div>
      <SideTab className="right-0 top-[701px] h-[36px] w-[17px]" />
    </div>
  );
}

/* ---------- outer bars ---------- */

function TopBar() {
  return (
    <div className="flex h-[24px] border-b border-[#15151b] bg-white">
      <TeamViewer className="ml-[3px] size-4" />
      <div className="relative ml-[3px] flex w-[76px] items-center border-x border-[#aaa] pb-[6px] pl-[9px] font-['Open_Sans',sans-serif] text-[11.500px] text-[#222]">
        <Fit w={38}>NB Yee</Fit>
        <svg viewBox="0 0 8 8" className="ml-[9px] size-2" stroke="#111" strokeWidth="2">
          <path d="M1 1l6 6M7 1L1 7" />
        </svg>
        <svg viewBox="0 0 12 6" className="absolute bottom-0 left-[30px] h-[6px] w-3">
          <path d="M0 6l6-6 6 6z" fill="#808080" />
        </svg>
      </div>
      <svg viewBox="0 0 11 11" className="ml-[11px] mt-[3px] size-[11px]" stroke="#000" strokeWidth="2.400">
        <path d="M5.500 0v11M0 5.500h11" />
      </svg>
      <div className="ml-auto flex h-[21px] w-[45px] items-center justify-center bg-[#e5e5e5]">
        <span className="h-px w-[10px] bg-black" />
      </div>
      <svg viewBox="0 0 11 11" className="ml-[18px] mt-[5px] size-[11px]" fill="none" stroke="#888">
        <path d="M.5 3.500h7v7h-7zM3 3V.5h7.500v7H8" />
      </svg>
      <Cross className="ml-[35px] mr-[20px] mt-[5px] size-[11px] text-[#888]" />
    </div>
  );
}

const dockIcons: { icon: ReactNode; state?: "run" | "front" | "hover" }[] = [
  {
    icon: (
      <svg viewBox="0 0 19 19" className="size-[19px]">
        <path d="M0 0h9v9H0zM10 0h9v9h-9zM0 10h9v9H0zM10 10h9v9h-9z" fill="#45bdf4" />
      </svg>
    ),
  },
  {
    icon: (
      <svg viewBox="0 0 20 20" className="size-[19px]">
        <path d="M10 1a9 9 0 1 1 0 18H1v-9a9 9 0 0 1 9-9z" fill="#6c63bd" />
        <rect x="5" y="6.500" width="7" height="7" rx="1" fill="#fff" />
        <path d="M12.500 9l3-2v6l-3-2z" fill="#fff" />
      </svg>
    ),
  },
  { icon: <Edge className="size-[20px]" /> },
  { icon: <Folder className="size-[20px]" />, state: "run" },
  { icon: <FaSpotify className="size-[19px] rounded-full bg-black text-[#2bd566]" />, state: "run" },
  { icon: <TeamViewer className="size-[19px]" />, state: "front" },
  { icon: <Navicat className="size-[19px]" />, state: "hover" },
  { icon: <Jar className="size-[19px]" />, state: "run" },
  { icon: <Board className="size-[19px]" />, state: "run" },
  {
    icon: (
      <svg viewBox="0 0 18 15" className="h-[15px] w-[18px]">
        <rect x=".5" y=".5" width="17" height="14" fill="#050505" stroke="#9a9a9a" />
        <path d="M1 2h16" stroke="#ddd" strokeWidth="1.500" />
        <path d="M2.500 5.500h2M6 5l2 2.500M9 5.500h1M11 7.500h3" stroke="#eee" />
      </svg>
    ),
    state: "run",
  },
];

function Dock() {
  return (
    <div className="mx-[47px] flex h-[37px] items-center bg-[#202020] font-['Open_Sans',sans-serif] text-white">
      <svg viewBox="0 0 20 16" className="ml-[16px] h-4 w-5">
        <circle cx="14" cy="6" r="5.500" fill="#f5a623" />
        <path d="M4.500 15.500a4 4 0 0 1-.3-8A5 5 0 0 1 13.500 7a4.300 4.300 0 0 1 1.300 8.500z" fill="#dfe8f3" />
      </svg>
      <div className="ml-[4px] flex w-[160px] flex-col items-start text-[10px] leading-[12.500px]">
        <Fit w={19}>86°F</Fit>
        <Fit w={59} className="text-[#c9c9c9]">Mostly cloudy</Fit>
      </div>
      <div className="ml-[381px] flex h-full items-center">
        {dockIcons.map((d, i) => (
          <div key={i} className="flex h-full w-[34.500px] items-center justify-center">
            <div
              className={clsx(
                "relative flex h-[33px] w-[31px] items-center justify-center rounded-[3px]",
                (d.state === "front" || d.state === "hover") && "bg-[#2e2e2e]",
              )}
            >
              {d.icon}
              {d.state && (
                <span className={clsx("absolute bottom-px h-[2px] rounded-full", d.state === "front" ? "w-3 bg-[#67bfe4]" : "w-[5px] bg-[#a5a5a5]")} />
              )}
            </div>
          </div>
        ))}
      </div>
      <ChevUp className="ml-auto h-[6px] w-[10px]" />
      <Fit w={18} className="ml-[13px] text-[9.500px]">ENG</Fit>
      <svg viewBox="0 0 14 11" className="ml-[14px] h-[10px] w-[13px]" fill="none" stroke="#eee" strokeWidth="1.200">
        <path d="M.8 4q6.200-5.500 12.400 0M3 6.300q4-3.500 8 0M5 8.400q2-1.600 4 0" />
        <circle cx="7" cy="9.700" r=".7" fill="#eee" />
      </svg>
      <Speaker muted className="ml-[6px] h-[11px] w-[13px]" />
      <svg viewBox="0 0 14 10" className="ml-[6px] h-[9px] w-[13px]" fill="none" stroke="#eee" strokeWidth="1.200">
        <rect x="1" y="1" width="10.500" height="8" rx="1.500" />
        <path d="M13 3.500v3" />
        <rect x="3" y="3" width="4.500" height="4" fill="#fff" stroke="none" />
      </svg>
      <div className="ml-[12px] mr-[12px] flex w-[43px] flex-col items-end text-[9.500px] leading-[12.500px]">
        <Fit w={21}>12:56</Fit>
        <Fit w={43}>28/9/2565</Fit>
      </div>
    </div>
  );
}

const barIcons: { icon: ReactNode; open?: boolean }[] = [
  { icon: <WinLogo className="size-4" /> },
  {
    icon: (
      <svg viewBox="0 0 16 16" className="size-4" fill="none" stroke="#fff" strokeWidth="1.300">
        <circle cx="10" cy="6" r="5" />
        <path d="M6.300 9.700L.5 15.500" />
      </svg>
    ),
  },
  { icon: <Edge className="size-[17px]" /> },
  {
    icon: (
      <svg viewBox="0 0 16 16" className="size-4" fill="none" stroke="#fff" strokeWidth="1.300">
        <rect width="16" height="16" fill="#2980d6" stroke="none" />
        <path d="M2 4l2.500 8L7 4M11.500 8Q9.300 7.500 9.300 5.700T11.500 4t2.200 1.700T11.500 8q-2.500.5-2.500 2.200T11.500 12t2.500-1.500" />
      </svg>
    ),
  },
  {
    icon: (
      <span className="flex size-[15px] items-center justify-center rounded-full bg-[#cf2a31] text-[7px] font-bold">DX</span>
    ),
  },
  {
    icon: (
      <svg viewBox="0 0 13 16" className="h-4 w-[13px]">
        <rect width="13" height="16" fill="#8299a6" />
        <rect x="2" y="1.500" width="9" height="3" fill="#1d4c63" />
        <path d="M2 6.500h2v2H2zM5.500 6.500h2v2h-2zM2 9.500h2v2H2zM5.500 9.500h2v2h-2zM2 12.500h2v2H2zM5.500 12.500h2v2h-2zM9 6.500h2v2H9z" fill="#dbe7ee" />
        <path d="M9 9.500h2v5H9z" fill="#164f8c" />
      </svg>
    ),
  },
  {
    icon: (
      <svg viewBox="0 0 16 16" className="size-4">
        <path d="M8.500 0q5 2 7 6.500Q16 15.500 8 16 0 15.500.2 8 .5 5 2.500 2.500L4 4.500Q7 4 8.500 0z" fill="#f8662c" />
        <path d="M8.500 0q5 2 7 6.500.3 4-2 6Q14 7 9 4z" fill="#ffc52e" />
        <circle cx="7.800" cy="9" r="3.500" fill="#6b38c4" />
        <path d="M3 7q3-1.500 5 .5-2.500 2-4.500 1z" fill="#ff9b3a" />
      </svg>
    ),
    open: true,
  },
  {
    icon: (
      <svg viewBox="0 0 16 16" className="size-4">
        <ellipse cx="7.500" cy="6" rx="7" ry="4.800" fill="#f1e7e7" transform="rotate(-15 7.500 6)" />
        <path d="M1 8Q2 2 10 2l3 1-9 6z" fill="#dc6a6a" />
        <path d="M4 7.500L11 3" stroke="#fff" strokeWidth="1.200" />
        <path d="M7 9l6 5M13 8l-4 6" stroke="#3989c9" strokeWidth="1.500" />
      </svg>
    ),
  },
  {
    icon: (
      <svg viewBox="0 0 16 16" className="size-4">
        <path d="M0 11Q0 4 7 4t6 5q0 3-4 3-1 3-4 3-5 0-5-4z" fill="#dce9f2" />
        <circle cx="3" cy="10" r="1.300" fill="#3fae49" />
        <circle cx="5" cy="7" r="1.300" fill="#e0453a" />
        <circle cx="8.500" cy="7" r="1.300" fill="#2c7bd0" />
        <path d="M13 1v14" stroke="#d28a33" strokeWidth="2" />
        <path d="M11.500 0h3v5h-3z" fill="#e8c27a" />
      </svg>
    ),
    open: true,
  },
  { icon: <Chrome className="size-[14px]" /> },
  { icon: <Navicat warm className="size-[17px]" /> },
  {
    icon: (
      <svg viewBox="0 0 16 16" className="size-4">
        <rect width="16" height="16" rx="1" fill="#3b55b8" />
        <path d="M2.500 2h11v2h-3l3 7v3h-11v-3l4-7h-4z" fill="#fff" />
        <path d="M5.500 10.500l3-5 2 5z" fill="#3b55b8" />
      </svg>
    ),
  },
  {
    icon: (
      <svg viewBox="0 0 17 16" className="h-4 w-[17px]">
        <rect x=".5" y="1.500" width="15" height="10" fill="#111" stroke="#cfcfcf" />
        <path d="M3 6h3M8 6h5" stroke="#999" />
        <path d="M4 14h7" stroke="#ccc" strokeWidth="1.500" />
        <rect x="12" y="8" width="4" height="7" fill="#e0e0e0" />
      </svg>
    ),
  },
  {
    icon: (
      <svg viewBox="0 0 14 14" className="size-[13px]" fill="none" strokeWidth="2.200">
        <path d="M3 4l6-2.500L12.500 6" stroke="#e8722d" />
        <path d="M12.500 6L11 11l-6 1.500" stroke="#b55428" />
        <path d="M5 12.500L1.500 8 3 4" stroke="#df9150" />
      </svg>
    ),
  },
  { icon: <Board className="size-4" /> },
  { icon: <Jar className="size-4" /> },
  {
    icon: (
      <svg viewBox="0 0 16 16" className="size-4">
        <circle cx="8" cy="8" r="8" fill="#f2f2f2" />
        <path d="M5 4.500h2M9 3.500h2.500M9 5.500h2" stroke="#444" />
        <path d="M3 8h10" stroke="#333" strokeDasharray="2 .7" strokeWidth="1.800" />
        <path d="M3 11h10" stroke="#6d7f99" strokeWidth=".9" />
        <path d="M6 13h5" stroke="#d99" strokeWidth=".8" />
      </svg>
    ),
    open: true,
  },
  { icon: <TeamViewer className="size-4" />, open: true },
  {
    icon: (
      <span className="flex size-4 items-center justify-center rounded-[3px] bg-[#10b410]">
        <svg viewBox="0 0 12 12" className="size-3">
          <path d="M6 .5c3.300 0 5.700 2 5.700 4.700S9 9 6 12V9.500C2.700 9.500.3 7.700.3 5.200S2.700.5 6 .5z" fill="#fff" />
        </svg>
      </span>
    ),
    open: true,
  },
  { icon: <Folder className="size-[17px]" />, open: true },
  {
    icon: (
      <svg viewBox="0 0 16 16" className="size-4">
        <path d="M2 4l4-3h7v13l-3 1H2z" fill="#5a5a60" stroke="#a9a9a9" />
        <circle cx="9" cy="7" r="4" fill="#c9d5f2" stroke="#eee" />
        <path d="M8 5l3 3.500" stroke="#2a48b8" strokeWidth="2" />
      </svg>
    ),
    open: true,
  },
];

function Taskbar() {
  return (
    <div className="flex h-[30px] items-center bg-[#101010] font-['Open_Sans',sans-serif] text-white">
      {barIcons.map((b, i) => (
        <div key={i} className="relative flex h-full w-[37.050px] shrink-0 items-center justify-center">
          {b.icon}
          {b.open && <span className="absolute bottom-0 h-[2px] w-[28px] bg-[#5a8cb8]" />}
        </div>
      ))}
      <ChevUp className="ml-auto h-[7px] w-[13px]" />
      <svg viewBox="0 0 17 13" className="ml-[11px] h-[13px] w-[16px]" fill="none" stroke="#fff" strokeWidth="1.100">
        <path d="M7 4h8v7H4V9" />
        <path d="M6 6h8v4H6z" fill="#fff" stroke="none" />
        <path d="M16 6v3M2 .5v3M5 .5v3M.8 3.500h5.400q0 3-2.700 3T.8 3.500zM3.500 6.500V9" />
      </svg>
      <svg viewBox="0 0 17 14" className="ml-[8px] h-[14px] w-4" fill="none" stroke="#fff" strokeWidth="1.100">
        <path d="M6 1.500h10v8.500H3V7M5 13h8M9 10v3M.6.600h4v3.500h-4zM2.500 4v9" />
      </svg>
      <Speaker className="ml-[7px] h-[13px] w-[16px]" />
      <Fit w={23} className="ml-[10px] text-[11.500px]">ENG</Fit>
      <Fit w={27} className="ml-[13px] text-[11.500px]">12:56</Fit>
      <Notice className="ml-[18px] size-4" />
      <span className="ml-[20px] mr-[4px] h-full w-px bg-[#5a5a5a]" />
    </div>
  );
}

export default function App() {
  return (
    <div className="flex h-[900px] w-[1600px] flex-col overflow-hidden bg-[#1a1a1a] font-['Liberation_Sans',Arial,sans-serif] leading-[14px]">
      <TopBar />
      <div className="relative mx-[47px] flex h-[809px] bg-black">
        <DesktopLeft />
        <LabWindow />
        <DesktopRight />
        <SideTab className="right-0 top-[729px] h-[40px] w-[19px]" />
      </div>
      <Dock />
      <Taskbar />
    </div>
  );
}
